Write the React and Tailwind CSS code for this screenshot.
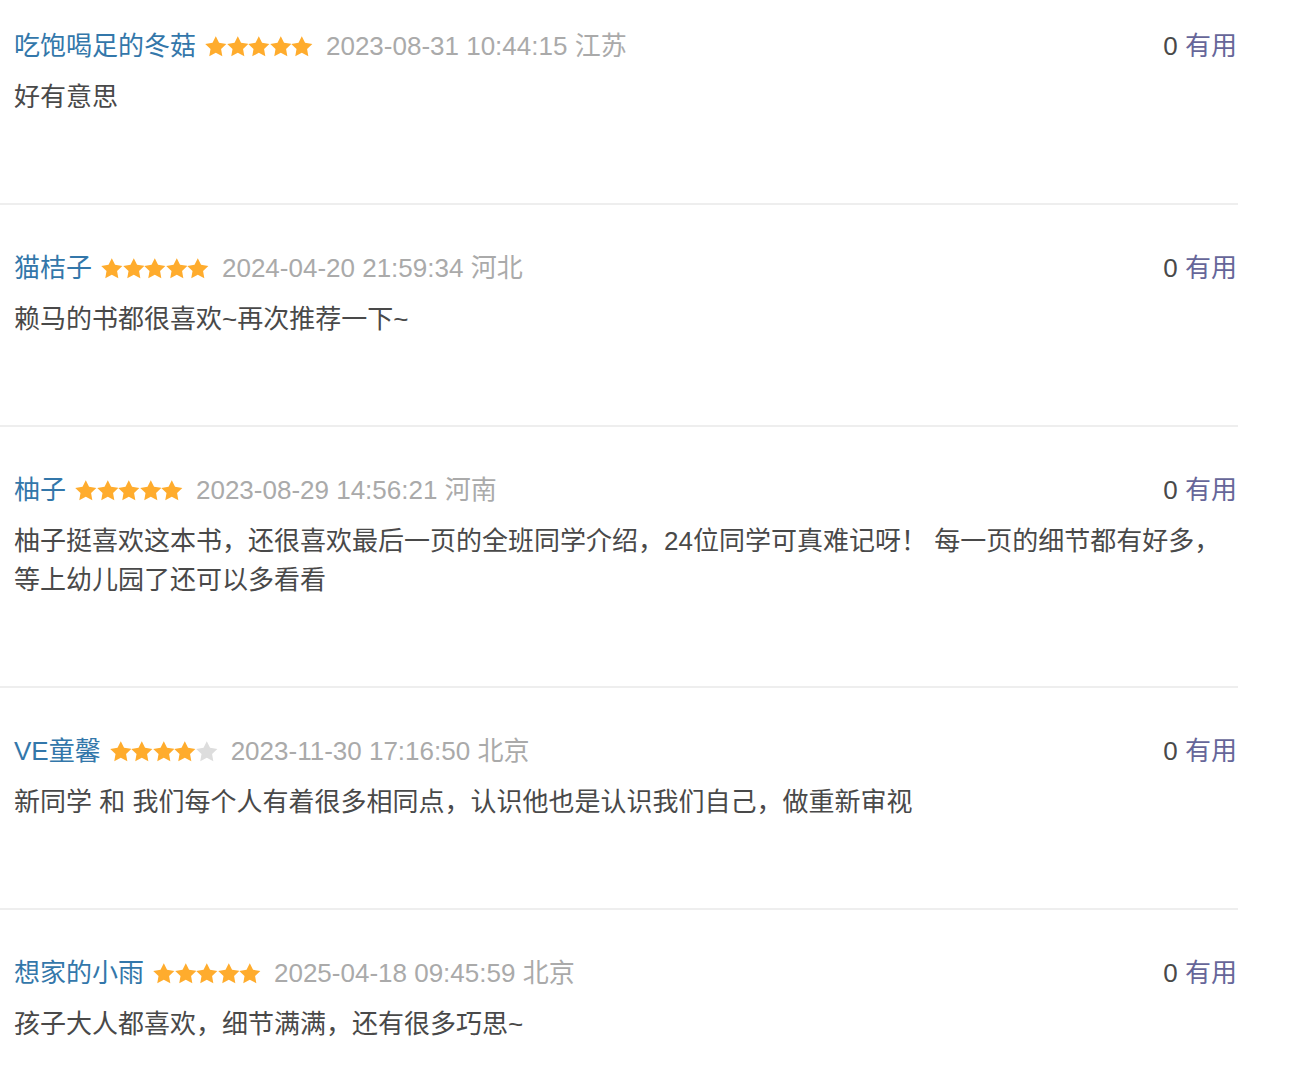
import React from 'react';

const comments = [
  { name: '吃饱喝足的冬菇', stars: 5, time: '2023-08-31 10:44:15', loc: '江苏', text: ['好有意思'] },
  { name: '猫桔子', stars: 5, time: '2024-04-20 21:59:34', loc: '河北', text: ['赖马的书都很喜欢~再次推荐一下~'] },
  {
    name: '柚子',
    stars: 5,
    time: '2023-08-29 14:56:21',
    loc: '河南',
    text: ['柚子挺喜欢这本书，还很喜欢最后一页的全班同学介绍，24位同学可真难记呀！ 每一页的细节都有好多，', '等上幼儿园了还可以多看看'],
  },
  { name: 'VE童馨', stars: 4, time: '2023-11-30 17:16:50', loc: '北京', text: ['新同学 和 我们每个人有着很多相同点，认识他也是认识我们自己，做重新审视'] },
  { name: '想家的小雨', stars: 5, time: '2025-04-18 09:45:59', loc: '北京', text: ['孩子大人都喜欢，细节满满，还有很多巧思~'] },
];

// fat five-point star, like the rating sprite
const Star = ({ on }) => (
  <svg width="21.6" height="20.6" viewBox="1.3 1.3 21.4 20.4" className="block">
    <path
      d="M12 1.5L15.23 8.05L22.46 9.1L17.23 14.2L18.47 21.4L12 18L5.53 21.4L6.77 14.2L1.54 9.1L8.77 8.05Z"
      fill={on ? '#ffac2d' : '#dddddd'}
    />
  </svg>
);

const Stars = ({ count }) => (
  <span className="ml-[9px] flex items-center">
    {[0, 1, 2, 3, 4].map((i) => (
      <Star key={i} on={i < count} />
    ))}
  </span>
);

export default function App() {
  return (
    <div
      className="w-[1238px] bg-white text-[26px]"
      style={{ fontFamily: '"Liberation Sans", "Noto Sans CJK SC", sans-serif' }}
    >
      {comments.map((c, idx) => (
        <div
          key={idx}
          className={
            idx === 0
              ? 'pl-[14px] pt-[27px] pb-[86px] border-b-2 border-[#eeeeee]'
              : idx === comments.length - 1
              ? 'pl-[14px] pt-[44px] pb-[45px]'
              : 'pl-[14px] pt-[44px] pb-[86px] border-b-2 border-[#eeeeee]'
          }
        >
          <div className="flex items-center justify-between h-[39px] leading-[39px]">
            <div className="flex items-center">
              <span className="text-[#3377aa]">{c.name}</span>
              <Stars count={c.stars} />
              <span className="ml-[13px] text-[#aaaaaa]">
                {c.time} {c.loc}
              </span>
            </div>
            <div className="pr-[1px]">
              <span className="text-[#494949]">0</span>
              <span className="text-[#666699]"> 有用</span>
            </div>
          </div>
          <div className="mt-[12px] leading-[39px] text-[#494949]">
            {c.text.map((t, i) => (
              <p key={i}>{t}</p>
            ))}
          </div>
        </div>
      ))}
    </div>
  );
}
